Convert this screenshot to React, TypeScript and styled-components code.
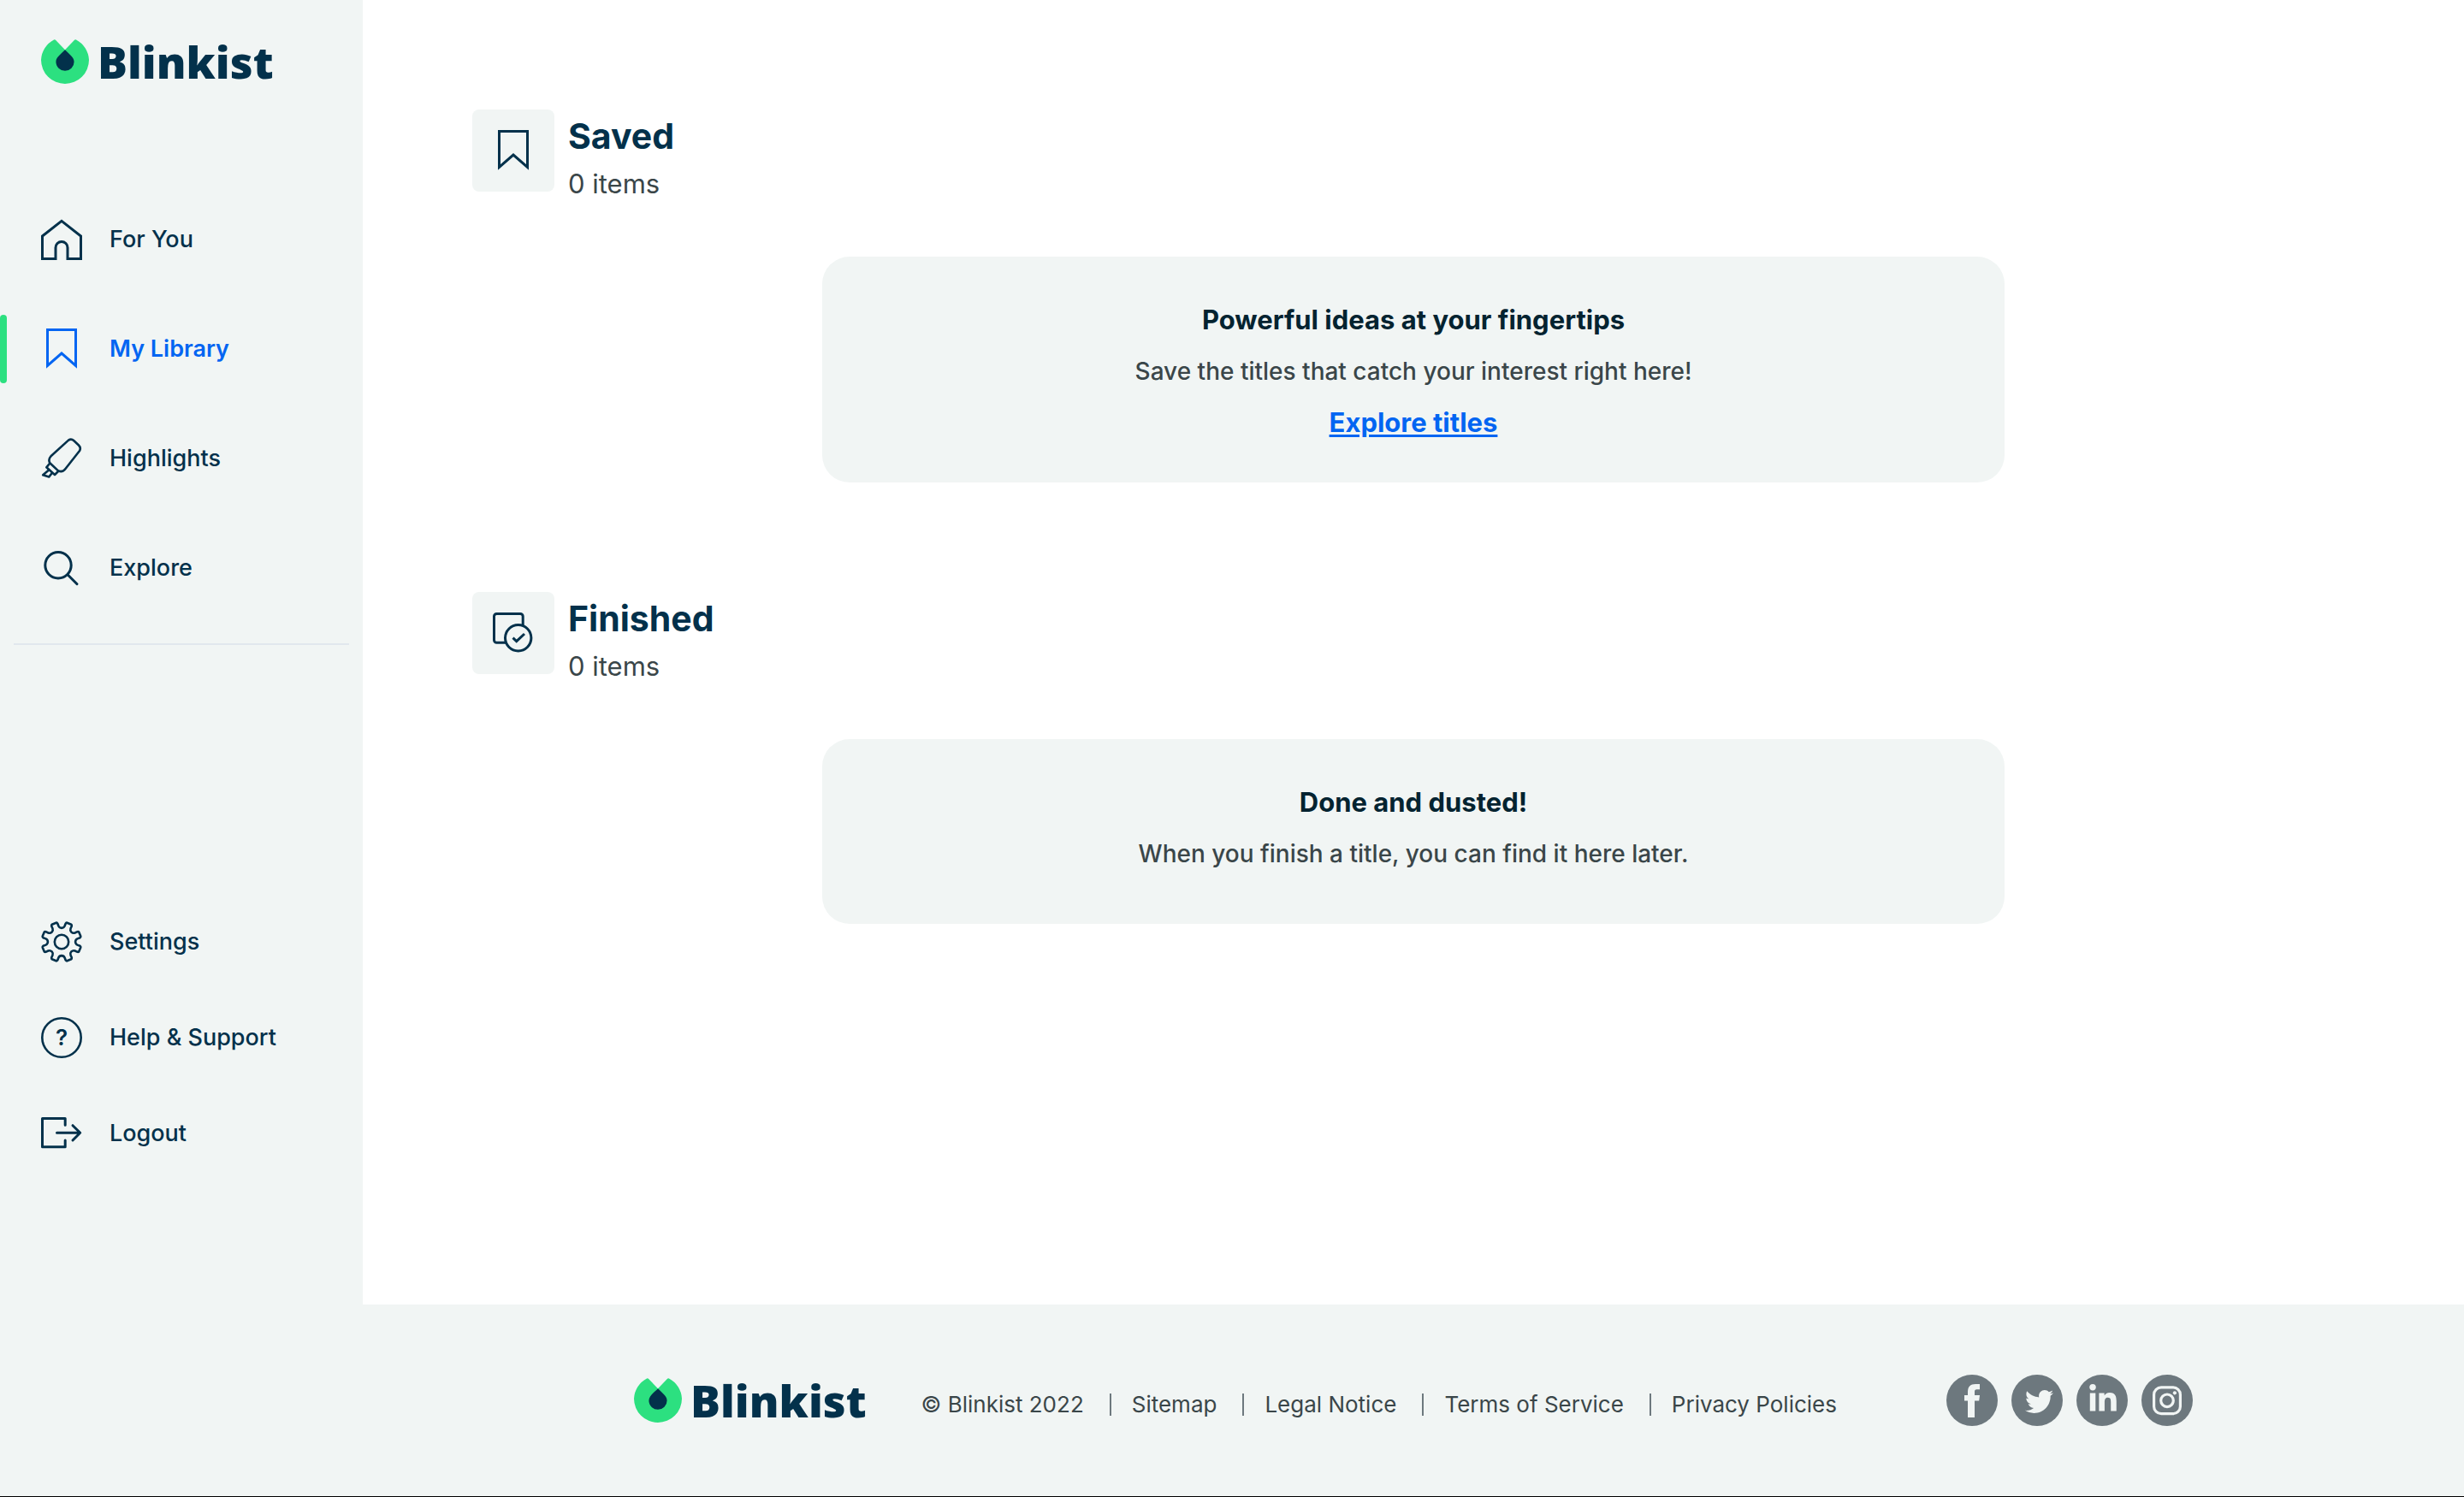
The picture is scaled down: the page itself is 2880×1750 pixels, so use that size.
import React from "react";
import styled, { createGlobalStyle } from "styled-components";
import { FaLinkedinIn, FaTwitter } from "react-icons/fa";

const color = {
  mist: "#f1f5f4",
  navy: "#03314b",
  ink: "#042330",
  text: "#3a4649",
  blue: "#0365f2",
  green: "#2ce080",
  divider: "#e1e7ed",
  slate: "#6d787e",
};

const GlobalStyle = createGlobalStyle`
  *, *::before, *::after { box-sizing: border-box; }
  body {
    margin: 0;
    background: #ffffff;
    color: ${color.text};
    font-family: Inter, "Liberation Sans", sans-serif;
  }
  h2, h3, p, ul { margin: 0; padding: 0; }
  ul { list-style: none; }
`;

const Page = styled.div`
  display: flex;
  flex-direction: column;
  min-height: 100vh;
`;

const Body = styled.div`
  display: flex;
  flex: 1;
`;

const Sidebar = styled.aside`
  display: flex;
  flex-direction: column;
  flex: none;
  width: 424px;
  padding: 46px 0 160px;
  background: ${color.mist};
`;

const LogoLink = styled.a`
  display: flex;
  align-items: center;
  gap: 10px;
  height: 52px;
  color: ${color.navy};
  font-family: "Open Sans", "Noto Sans", sans-serif;
  font-size: 52px;
  font-weight: 800;
  line-height: 52px;
  text-decoration: none;
`;

const SidebarHeader = styled.div`
  display: flex;
  padding-left: 48px;
  margin-bottom: 142px;
`;

const NavList = styled.ul<{ $gap: number }>`
  display: flex;
  flex-direction: column;
  gap: ${(p) => p.$gap}px;
`;

const NavLink = styled.a<{ $active?: boolean }>`
  display: flex;
  align-items: center;
  height: 80px;
  color: ${(p) => (p.$active ? color.blue : color.navy)};
  font-size: 27px;
  font-weight: ${(p) => (p.$active ? 600 : 500)};
  text-decoration: none;

  &::before {
    content: "";
    width: 8px;
    height: 80px;
    margin-right: 40px;
    border-radius: 4px;
    background: ${(p) => (p.$active ? color.green : "transparent")};
  }

  svg {
    margin-right: 32px;
  }
`;

const NavLabel = styled.span`
  padding-bottom: 2px;
`;

const Divider = styled.hr`
  align-self: stretch;
  height: 2px;
  margin: 48px 16px auto;
  border: 0;
  background: ${color.divider};
`;

const Main = styled.main`
  display: flex;
  flex: 1;
  flex-direction: column;
  gap: 128px;
  padding: 128px;
`;

const SectionHeader = styled.header`
  display: flex;
  gap: 16px;
  margin-bottom: 60px;
`;

const IconTile = styled.div`
  display: grid;
  place-items: center;
  width: 96px;
  height: 96px;
  border-radius: 8px;
  background: ${color.mist};
  color: ${color.navy};
`;

const SectionTitle = styled.h2`
  color: ${color.navy};
  font-size: 41px;
  font-weight: 700;
  line-height: 62px;
`;

const ItemCount = styled.p`
  font-size: 31px;
  line-height: 50px;
`;

const Card = styled.div`
  width: 100%;
  max-width: 1382px;
  min-height: 216px;
  margin: 0 auto;
  padding: 44px 48px 40px;
  border-radius: 32px;
  background: ${color.mist};
  text-align: center;
  font-size: 31px;
  line-height: 60px;
`;

const CardTitle = styled.h3`
  color: ${color.ink};
  font-size: 31px;
  font-weight: 700;
`;

const CardText = styled.p`
  font-size: 28px;
  font-weight: 500;
`;

const CardLink = styled.a`
  color: ${color.blue};
  font-weight: 700;
  text-decoration: underline;
  text-decoration-thickness: 3px;
  text-underline-offset: 3px;
`;

const Footer = styled.footer`
  display: flex;
  align-items: center;
  justify-content: center;
  padding: 82px 0 82px 424px;
  border-bottom: 1px solid #000000;
  background: ${color.mist};
`;

const LegalList = styled.ul`
  display: flex;
  padding: 10px 128px 0 64px;
  font-size: 26px;
  line-height: 40px;
`;

const LegalItem = styled.li`
  display: flex;
  align-items: center;

  & + &::before {
    content: "";
    width: 2px;
    height: 26px;
    margin: 0 24px 0 30px;
    background: ${color.slate};
  }

  a {
    color: inherit;
    text-decoration: none;
  }
`;

const SocialList = styled.ul`
  display: flex;
  gap: 16px;
`;

const SocialLink = styled.a`
  display: block;
  width: 60px;
  height: 60px;
  border-radius: 50%;
  background: ${color.slate};
  color: ${color.mist};
`;

const Icon = ({ children, width = 3 }: { children: React.ReactNode; width?: number }) => (
  <svg width="48" height="48" viewBox="0 0 48 48" fill="none" stroke="currentColor" strokeWidth={width} aria-hidden="true">
    {children}
  </svg>
);

const HomeIcon = () => (
  <Icon>
    <path d="M1.5 20L24 2.4 46.5 20V46.5H31V33.5a7 7 0 0 0-14 0V46.5H1.5Z" />
  </Icon>
);

const BookmarkIcon = () => (
  <Icon>
    <path d="M7.5 1.5H40.5V43.5L24 29 7.5 43.5Z" />
  </Icon>
);

const HighlighterIcon = () => (
  <Icon width={2.6}>
    <g strokeLinejoin="round">
      <path d="M32 2.6Q35.3 0.4 38.2 3L44 8.5Q47 11.5 45 15L28.5 36Q25.5 40.3 20.3 38.6L10.3 29.3Q8 25 11.5 21.3Z" />
      <path d="M10.3 29.5L6.3 34.3 16 43 20.3 38.8" />
      <path d="M9.3 37.3L2.2 43.3 9.3 45.4 13 40.8" />
    </g>
  </Icon>
);

const SearchIcon = () => (
  <Icon>
    <circle cx="20" cy="20.7" r="15.2" />
    <path d="M31 31.7L42 42.7" strokeLinecap="round" />
  </Icon>
);

const polar = (radius: number, degrees: number) => {
  const a = (degrees * Math.PI) / 180;
  return `${(24 + radius * Math.sin(a)).toFixed(2)} ${(24 - radius * Math.cos(a)).toFixed(2)}`;
};

const gearPath =
  [0, 45, 90, 135, 180, 225, 270, 315]
    .map(
      (a, i) =>
        `${i ? "L" : "M"}${polar(18.8, a - 11)}Q${polar(16.4, a - 9)} ${polar(16.1, a)}Q${polar(16.4, a + 9)} ${polar(18.8, a + 11)}` +
        `L${polar(22, a + 12.5)}Q${polar(23.2, a + 14)} ${polar(23.2, a + 16)}L${polar(23.2, a + 29)}Q${polar(23.2, a + 31)} ${polar(22, a + 32.5)}`
    )
    .join("") + "Z";

const GearIcon = () => (
  <Icon width={2.6}>
    <path d={gearPath} strokeLinejoin="round" />
    <circle cx="24" cy="24" r="8.2" />
  </Icon>
);

const HelpIcon = () => (
  <Icon width={2.6}>
    <circle cx="24" cy="24" r="22.7" />
    <text x="24" y="33" textAnchor="middle" fill="currentColor" stroke="none" fontSize="26" fontWeight="600">
      ?
    </text>
  </Icon>
);

const LogoutIcon = () => (
  <Icon>
    <g strokeLinecap="round" strokeLinejoin="round">
      <path d="M28.2 14.3V6.5H1.5V39.8H28.2V32" />
      <path d="M18.5 23.3H45.5M37 14.7L45.7 23.3 37 32" />
    </g>
  </Icon>
);

const FinishedIcon = () => (
  <Icon>
    <path d="M35.2 15V4.5a3 3 0 0 0-3-3H4.5a3 3 0 0 0-3 3V32.2a3 3 0 0 0 3 3H15" />
    <circle cx="29.7" cy="29.7" r="15.2" />
    <path d="M23.5 29.7L27.7 33.6 37 25" />
  </Icon>
);

const Logo = () => (
  <LogoLink href="#">
    <svg width="56" height="52" viewBox="0 0 56 52" aria-hidden="true">
      <path
        fill={color.green}
        d="M15 0.4Q16.2-0.3 17.2 0.9L28 12.3 38.8 0.9Q39.8-0.3 41 0.4A28 28 0 0 1 56 24A28 28 0 0 1 0 24A28 28 0 0 1 15 0.4Z"
      />
      <path fill={color.navy} d="M28 12.3C31 15.8 38.6 20.5 38.6 26.2A10.6 10.6 0 0 1 17.4 26.2C17.4 20.5 25 15.8 28 12.3Z" />
    </svg>
    Blinkist
  </LogoLink>
);

const FacebookGlyph = () => (
  <path
    fill="currentColor"
    d="M25 50V30.5H21V24H25V20C25 14 28 11 34 11H39V17.3H35.5C33.5 17.3 33 18.3 33 20V24H39L38.2 30.5H33V50Z"
  />
);

const InstagramGlyph = () => (
  <g fill="none" stroke="currentColor" strokeWidth="3.2">
    <rect x="14.6" y="14.9" width="30.8" height="30.8" rx="8.5" />
    <circle cx="30" cy="30.3" r="7.3" />
    <circle cx="38.9" cy="21.3" r="2.1" fill="currentColor" stroke="none" />
  </g>
);

const primaryNav = [
  { label: "For You", icon: <HomeIcon /> },
  { label: "My Library", icon: <BookmarkIcon />, active: true },
  { label: "Highlights", icon: <HighlighterIcon /> },
  { label: "Explore", icon: <SearchIcon /> },
];

const secondaryNav = [
  { label: "Settings", icon: <GearIcon /> },
  { label: "Help & Support", icon: <HelpIcon /> },
  { label: "Logout", icon: <LogoutIcon /> },
];

const legalLinks = ["Sitemap", "Legal Notice", "Terms of Service", "Privacy Policies"];

const socials = [
  { name: "Facebook", glyph: <FacebookGlyph /> },
  { name: "Twitter", glyph: <FaTwitter x="16" y="15" size={33} /> },
  { name: "LinkedIn", glyph: <FaLinkedinIn x="13" y="11" size={36} /> },
  { name: "Instagram", glyph: <InstagramGlyph /> },
];

type NavEntry = { label: string; icon: React.ReactNode; active?: boolean };

const Nav = ({ items, gap, name }: { items: NavEntry[]; gap: number; name: string }) => (
  <nav aria-label={name}>
    <NavList $gap={gap}>
      {items.map((item) => (
        <li key={item.label}>
          <NavLink href="#" $active={item.active} aria-current={item.active ? "page" : undefined}>
            {item.icon}
            <NavLabel>{item.label}</NavLabel>
          </NavLink>
        </li>
      ))}
    </NavList>
  </nav>
);

const Shelf = ({ title, icon, children }: { title: string; icon: React.ReactNode; children: React.ReactNode }) => (
  <section>
    <SectionHeader>
      <IconTile>{icon}</IconTile>
      <div>
        <SectionTitle>{title}</SectionTitle>
        <ItemCount>0 items</ItemCount>
      </div>
    </SectionHeader>
    <Card>{children}</Card>
  </section>
);

export default function App() {
  return (
    <Page>
      <GlobalStyle />
      <Body>
        <Sidebar>
          <SidebarHeader>
            <Logo />
          </SidebarHeader>
          <Nav name="Library" items={primaryNav} gap={48} />
          <Divider />
          <Nav name="Account" items={secondaryNav} gap={32} />
        </Sidebar>
        <Main>
          <Shelf title="Saved" icon={<BookmarkIcon />}>
            <CardTitle>Powerful ideas at your fingertips</CardTitle>
            <CardText>Save the titles that catch your interest right here!</CardText>
            <CardLink href="#">Explore titles</CardLink>
          </Shelf>
          <Shelf title="Finished" icon={<FinishedIcon />}>
            <CardTitle>Done and dusted!</CardTitle>
            <CardText>When you finish a title, you can find it here later.</CardText>
          </Shelf>
        </Main>
      </Body>
      <Footer>
        <Logo />
        <LegalList>
          <LegalItem>© Blinkist 2022</LegalItem>
          {legalLinks.map((label) => (
            <LegalItem key={label}>
              <a href="#">{label}</a>
            </LegalItem>
          ))}
        </LegalList>
        <SocialList>
          {socials.map(({ name, glyph }) => (
            <li key={name}>
              <SocialLink href="#" aria-label={name}>
                <svg width="60" height="60" viewBox="0 0 60 60" aria-hidden="true">
                  {glyph}
                </svg>
              </SocialLink>
            </li>
          ))}
        </SocialList>
      </Footer>
    </Page>
  );
}
